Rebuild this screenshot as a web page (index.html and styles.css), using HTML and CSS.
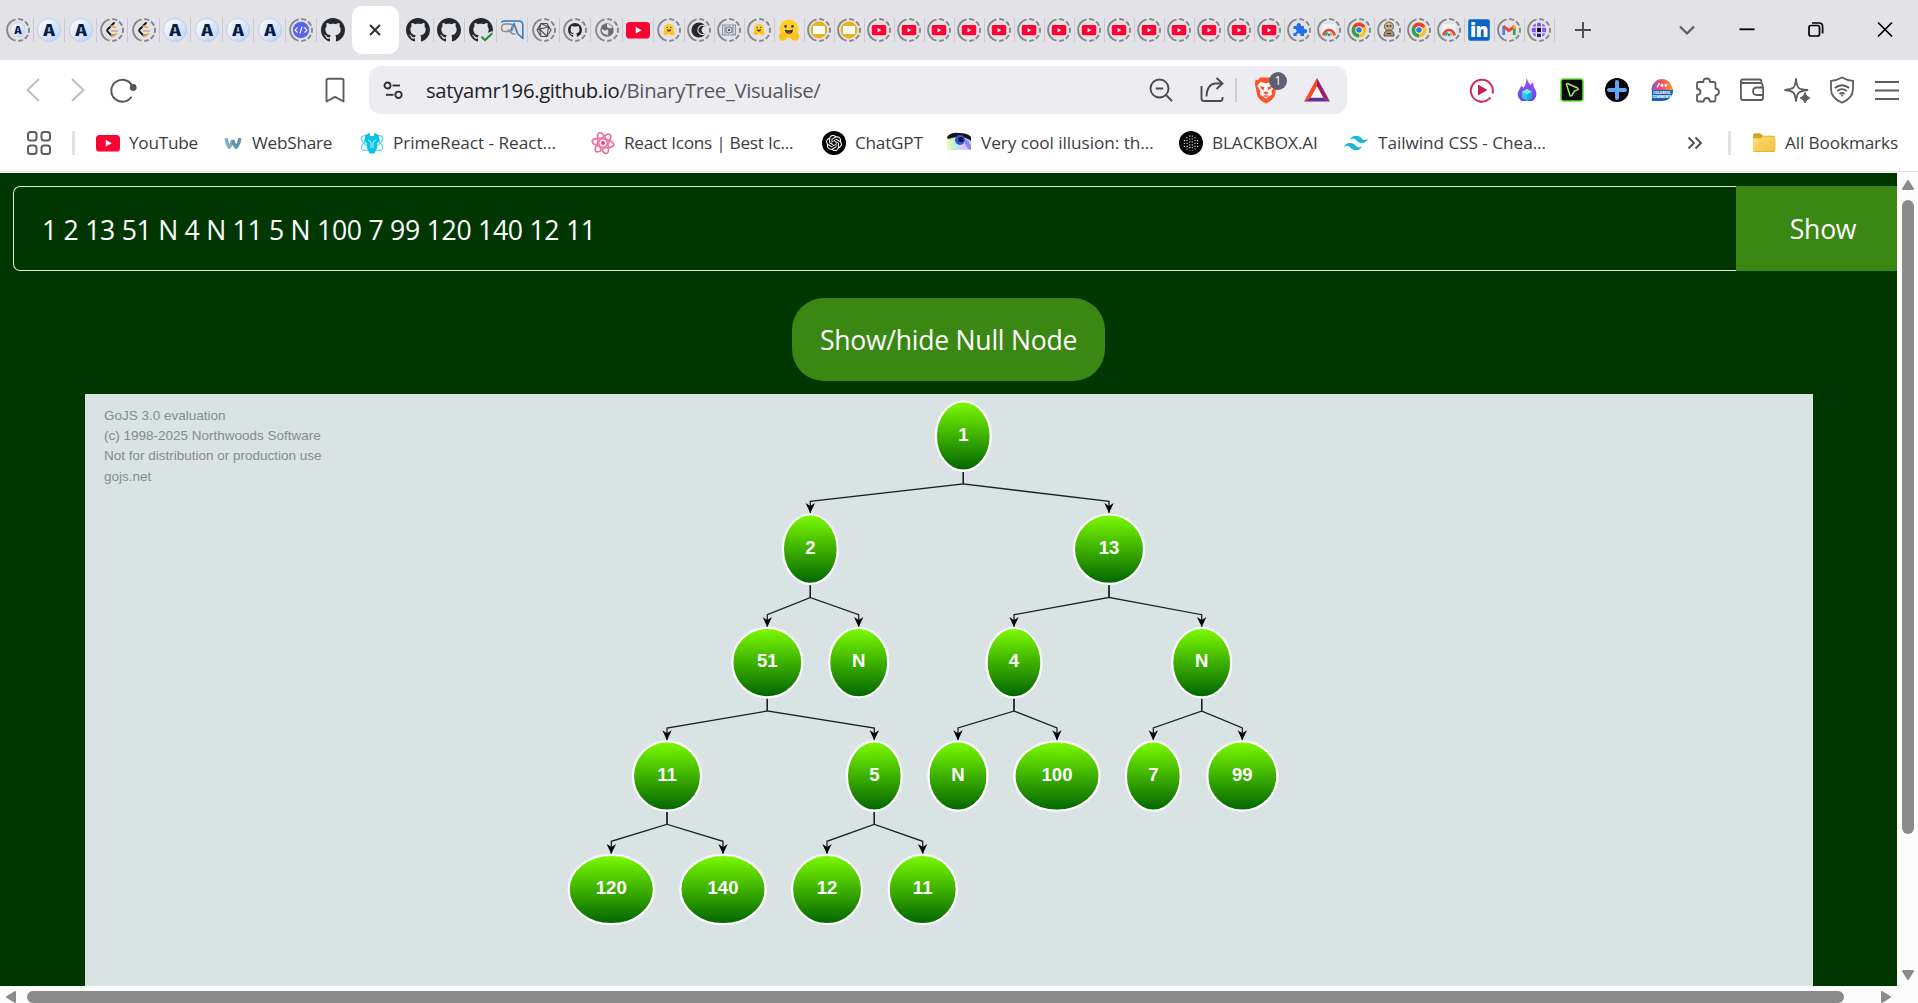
FILE: index.html
```html
<!DOCTYPE html>
<html lang="en">
<head>
<meta charset="utf-8">
<title>BinaryTree Visualise</title>
<link rel="stylesheet" href="styles.css">
</head>
<body>
<svg class="defs" aria-hidden="true">
  <defs>
    <linearGradient id="node-fill" x1="0" y1="0" x2="0" y2="1"><stop offset="0" stop-color="#7cfc00"/><stop offset="1" stop-color="#006400"/></linearGradient>
    <linearGradient id="az-fill" x1="0" y1="0" x2="1" y2="1"><stop offset="0" stop-color="#ffffff"/><stop offset="1" stop-color="#b9d2fb"/></linearGradient>
    <linearGradient id="flame-fill" x1="0" y1="0" x2="0" y2="1"><stop offset="0" stop-color="#b04ff0"/><stop offset="1" stop-color="#5a48ee"/></linearGradient>
    <linearGradient id="folder-fill" x1="0" y1="0" x2="1" y2="1"><stop offset="0" stop-color="#ffe17d"/><stop offset="1" stop-color="#f5bd36"/></linearGradient>
    <linearGradient id="bubble-fill" x1="0" y1="0" x2="1" y2="0"><stop offset="0" stop-color="#7c58d8"/><stop offset=".45" stop-color="#f0506a"/><stop offset="1" stop-color="#f79a2c"/></linearGradient>
    <linearGradient id="eye-fill" x1="0" y1="0" x2="1" y2="0"><stop offset="0" stop-color="#f6f06a"/><stop offset=".35" stop-color="#7fe8d0"/><stop offset=".65" stop-color="#c09cf5"/><stop offset="1" stop-color="#5fd5ff"/></linearGradient>
    <marker id="arrow" markerUnits="userSpaceOnUse" markerWidth="10" markerHeight="11" refX="10" refY="5" orient="auto"><path d="M0 .3L10 5L0 9.7L3 5z"/></marker>
  </defs>
  <symbol id="ring" viewBox="0 0 24 24"><g fill="none" stroke="#85868a" stroke-width="1.9"><path d="M9.5 1.3A11 11 0 0 0 9.5 22.7"/><path d="M12.3 1A11 11 0 0 1 23 12A11 11 0 0 1 12.3 23" stroke-dasharray="5 2.3"/></g></symbol>
  <symbol id="az" viewBox="0 0 24 24"><circle cx="12" cy="12" r="11.5" fill="url(#az-fill)" stroke="#b4c6e6" stroke-width=".8"/><text x="12" y="17.6" text-anchor="middle" class="logo-a">A</text><path d="M10.8 10h2.4M10.600 13h2.800" stroke="#b9cff5" stroke-width="1.2"/></symbol>
  <symbol id="leet" viewBox="0 0 24 24"><path d="M14 5L7.5 11.5Q6.7 12.5 7.5 13.5L11 17.2Q12 18 13.2 17.3" fill="none" stroke="#17181a" stroke-width="1.9" stroke-linecap="round"/><path d="M11 8.4Q13 7.4 15 9.6M11.4 17.5Q14 18.6 16 15.8" fill="none" stroke="#f5a02c" stroke-width="1.8" stroke-linecap="round"/><path d="M11.5 12.8h6" stroke="#b3b4b7" stroke-width="1.7" stroke-linecap="round"/></symbol>
  <symbol id="code" viewBox="0 0 24 24"><circle cx="12" cy="12" r="8.2" fill="#5b63ee"/><path d="M8.6 9.3L6 12l2.6 2.7M15.4 9.3L18 12l-2.6 2.7M13.2 8.5l-2.4 7" fill="none" stroke="#fff" stroke-width="1.1"/></symbol>
  <symbol id="github" viewBox="0 0 16 16"><path d="M8 0C3.58 0 0 3.58 0 8c0 3.54 2.29 6.53 5.47 7.59.4.07.55-.17.55-.38 0-.19-.01-.82-.01-1.49-2.01.37-2.53-.49-2.69-.94-.09-.23-.48-.94-.82-1.13-.28-.15-.68-.52-.01-.53.63-.01 1.08.58 1.23.82.72 1.21 1.87.87 2.33.66.07-.52.28-.87.51-1.07-1.78-.2-3.64-.89-3.64-3.95 0-.87.31-1.59.82-2.15-.08-.2-.36-1.02.08-2.12 0 0 .67-.21 2.2.82.64-.18 1.32-.27 2-.27.68 0 1.36.09 2 .27 1.53-1.04 2.2-.82 2.2-.82.44 1.1.16 1.92.08 2.12.51.56.82 1.27.82 2.15 0 3.07-1.87 3.75-3.65 3.95.29.25.54.73.54 1.48 0 1.07-.01 1.93-.01 2.2 0 .21.15.46.55.38A8.013 8.013 0 0 0 16 8c0-4.42-3.58-8-8-8z" fill="#24292f"/></symbol>
  <symbol id="yt" viewBox="0 0 24 24"><rect y="4" width="24" height="16.5" rx="3.6" fill="#ff0033"/><path d="M9.7 8.8v6.8l6-3.4z" fill="#fff"/></symbol>
  <symbol id="hf" viewBox="0 0 24 24"><circle cx="12" cy="11" r="9.5" fill="#ffcf24"/><circle cx="6" cy="18.5" r="4.2" fill="#ffc21c"/><circle cx="18" cy="18.5" r="4.2" fill="#ffc21c"/><circle cx="8.6" cy="8.4" r="1.3" fill="#3a3b45"/><circle cx="15.4" cy="8.4" r="1.3" fill="#3a3b45"/><path d="M7.8 11.6Q12 13 16.2 11.6Q15.5 16.2 12 16.2T7.8 11.6z" fill="#3a3b45"/><path d="M10 15Q12 13.6 14 15Q12 16.6 10 15z" fill="#ef4e4e"/></symbol>
  <symbol id="slide" viewBox="0 0 24 24"><circle cx="12" cy="12" r="8.4" fill="#eab41e"/><rect x="6" y="8" width="12" height="8" rx=".6" fill="#fff"/></symbol>
  <symbol id="openai" viewBox="0 0 24 24"><path fill="currentColor" d="M22.2819 9.8211a5.9847 5.9847 0 0 0-.5157-4.9108 6.0462 6.0462 0 0 0-6.5098-2.9A6.0651 6.0651 0 0 0 4.9807 4.1818a5.9847 5.9847 0 0 0-3.9977 2.9 6.0462 6.0462 0 0 0 .7427 7.0966 5.98 5.98 0 0 0 .511 4.9107 6.051 6.051 0 0 0 6.5146 2.9001A5.9847 5.9847 0 0 0 13.2599 24a6.0557 6.0557 0 0 0 5.7718-4.2058 5.9894 5.9894 0 0 0 3.9977-2.9001 6.0557 6.0557 0 0 0-.7475-7.0729zm-9.022 12.6081a4.4755 4.4755 0 0 1-2.8764-1.0408l.1419-.0804 4.7783-2.7582a.7948.7948 0 0 0 .3927-.6813v-6.7369l2.02 1.1686a.071.071 0 0 1 .038.052v5.5826a4.504 4.504 0 0 1-4.4945 4.4944zm-9.6607-4.1254a4.4708 4.4708 0 0 1-.5346-3.0137l.142.0852 4.783 2.7582a.7712.7712 0 0 0 .7806 0l5.8428-3.3685v2.3324a.0804.0804 0 0 1-.0332.0615L9.74 19.9502a4.4992 4.4992 0 0 1-6.1408-1.6464zM2.3408 7.8956a4.485 4.485 0 0 1 2.3655-1.9728V11.6a.7664.7664 0 0 0 .3879.6765l5.8144 3.3543-2.0201 1.1685a.0757.0757 0 0 1-.071 0l-4.8303-2.7865A4.504 4.504 0 0 1 2.3408 7.872zm16.5963 3.8558L13.1038 8.364 15.1192 7.2a.0757.0757 0 0 1 .071 0l4.8303 2.7913a4.4944 4.4944 0 0 1-.6765 8.1042v-5.6772a.79.79 0 0 0-.407-.667zm2.0107-3.0231l-.142-.0852-4.7735-2.7818a.7759.7759 0 0 0-.7854 0L9.409 9.2297V6.8974a.0662.0662 0 0 1 .0284-.0615l4.8303-2.7866a4.4992 4.4992 0 0 1 6.6802 4.66zM8.3065 12.863l-2.02-1.1638a.0804.0804 0 0 1-.038-.0567V6.0742a4.4992 4.4992 0 0 1 7.3757-3.4537l-.142.0805L8.704 5.459a.7948.7948 0 0 0-.3927.6813zm1.0976-2.3654l2.602-1.4998 2.6069 1.4998v2.9994l-2.5974 1.4997-2.6067-1.4997Z"/></symbol>
  <symbol id="hexa" viewBox="0 0 24 24"><path d="M9 5.500h6l4 6.500-4 6.500H9L5 12zM9 5.500l7.500 3.500L19 12M16.500 9L15 18.500M16.500 9L7.500 11 5 12M7.500 11L9 5.500M7.500 11L9 18.500M7.500 11L15 18.500" fill="none" stroke="#4b4d51" stroke-width="1.1"/></symbol>
  <symbol id="earth" viewBox="0 0 24 24"><circle cx="12" cy="12" r="6.700" fill="#6a6c70"/><path d="M6.500 10.500q3 3 5 1.500t2 2.500q-1 1 0 2.500-4 0-6.500-3zM12 6q4 0 5.500 3.500l-2.500 1-3-1.500z" fill="#e3e2e7"/></symbol>
  <symbol id="chrome" viewBox="0 0 24 24"><circle cx="12" cy="12" r="7.400" fill="#fcc31e"/><path d="M12 12L5.600 8.300A7.400 7.400 0 0 1 18.400 8.300z" fill="#e8402f"/><path d="M12 12L5.600 8.300A7.400 7.400 0 0 0 12 19.400z" fill="#2fa24c"/><circle cx="12" cy="12" r="3.700" fill="#fff"/><circle cx="12" cy="12" r="2.800" fill="#2b78e4"/></symbol>
  <symbol id="store" viewBox="0 0 24 24"><rect x="5" y="6" width="14" height="12" rx="2" fill="#f3f3f5"/><path d="M6.500 17.500a5.500 5.500 0 0 1 11 0" fill="none" stroke="#dd4a3d" stroke-width="2.700"/><path d="M8.800 17.800a3.200 3.200 0 0 1 2-3" fill="none" stroke="#36a853" stroke-width="2"/><path d="M15.200 17.800a3.200 3.200 0 0 0-2-3" fill="none" stroke="#f8bc1a" stroke-width="2"/><circle cx="12" cy="16.800" r="1.500" fill="#3d7ee8"/></symbol>
  <symbol id="piece" viewBox="0 0 24 24"><path d="M6.500 8h3.300a2.200 2.200 0 1 1 4 0H17v3.200a2.200 2.200 0 1 1 0 4V18h-3.600a2 2 0 1 0-3.600 0H6.500v-3.400a2 2 0 1 0 0-3.400z" fill="#1f6fe8"/></symbol>
</svg>

<header class="tabstrip">
  <div class="tabs tabs-wide">
    <span class="tab"><svg class="fav"><use href="#ring"/><use href="#az" x="4.500" y="4.500" width="15" height="15"/></svg></span>
    <span class="tab"><svg class="fav"><use href="#az"/></svg></span>
    <span class="tab"><svg class="fav"><use href="#az"/></svg></span>
    <span class="tab"><svg class="fav"><use href="#ring"/><use href="#leet"/></svg></span>
    <span class="tab"><svg class="fav"><use href="#ring"/><use href="#leet"/></svg></span>
    <span class="tab"><svg class="fav"><use href="#az"/></svg></span>
    <span class="tab"><svg class="fav"><use href="#az"/></svg></span>
    <span class="tab"><svg class="fav"><use href="#az"/></svg></span>
    <span class="tab"><svg class="fav"><use href="#az"/></svg></span>
    <span class="tab"><svg class="fav"><use href="#ring"/><use href="#code"/></svg></span>
    <span class="tab tab-last"><svg class="fav"><use href="#github"/></svg></span>
  </div>
  <div class="tab-active"><svg width="12" height="12" viewBox="0 0 12 12"><path d="M1 1l10 10M11 1L1 11" stroke="#303136" stroke-width="2"/></svg></div>
  <div class="tabs tabs-wide">
    <span class="tab"><svg class="fav"><use href="#github"/></svg></span>
    <span class="tab"><svg class="fav"><use href="#github"/></svg></span>
    <span class="tab"><svg class="fav" viewBox="0 0 24 24"><use href="#github"/><path d="M10.500 24V16h5l8-3v11z" fill="#e3e2e7"/><path d="M12.500 18.800l3.500 3.400L23 15.500" fill="none" stroke="#1c8a3c" stroke-width="2"/></svg></span>
    <span class="tab"><svg class="fav" viewBox="0 0 24 24" fill="none" stroke-linejoin="round"><path d="M1.500 4.500Q2 3 4.500 3H19q3.800 0 3.800 4v13.500L17.500 15.500" stroke="#2c78c4" stroke-width="1.500"/><path d="M17.500 15.500L14 5.500 10.500 13" stroke="#2c78c4" stroke-width="1.600"/><path d="M1.500 10.200Q1.500 6 5.500 6h4q3.500 0 3.500 3.500t-3.500 4h-4q-4 0-4-3.300zM8 11.500l4.500 4.500h3" stroke="#8b8d92" stroke-width="1.500"/></svg></span>
    <span class="tab"><svg class="fav"><use href="#ring"/><use href="#hexa"/></svg></span>
    <span class="tab"><svg class="fav"><use href="#ring"/><use href="#github" x="5" y="5" width="14" height="14"/></svg></span>
    <span class="tab"><svg class="fav"><use href="#ring"/><use href="#earth"/></svg></span>
    <span class="tab"><svg class="fav"><use href="#yt"/></svg></span>
  </div>
  <div class="tabs tabs-narrow">
    <span class="tab"><svg class="fav"><use href="#ring"/><use href="#hf" x="5.500" y="5" width="13" height="13"/></svg></span>
    <span class="tab"><svg class="fav" viewBox="0 0 24 24"><use href="#ring"/><circle cx="12" cy="12" r="7.600" fill="#26272b"/><path d="M18.500 8.500A4.600 4.600 0 1 0 18.500 15.500" fill="none" stroke="#e3e2e7" stroke-width="1.200"/><path d="M20 8.500h-3.500Q12.500 12 16.500 15.500H20z" fill="#e3e2e7"/></svg></span>
    <span class="tab"><svg class="fav" viewBox="0 0 24 24"><use href="#ring"/><path d="M5.500 7h13v10h-13zM8 7v10M16 7v10" fill="none" stroke="#87929f" stroke-width="1.100"/><circle cx="12" cy="12" r="3.200" fill="#dce2ea" stroke="#5b6b7d"/><circle cx="12" cy="12" r="1.200" fill="#4a5a6d"/></svg></span>
    <span class="tab"><svg class="fav"><use href="#ring"/><use href="#hf" x="5.500" y="5" width="13" height="13"/></svg></span>
    <span class="tab"><svg class="fav"><use href="#hf"/></svg></span>
    <span class="tab"><svg class="fav"><use href="#ring"/><use href="#slide"/></svg></span>
    <span class="tab"><svg class="fav"><use href="#ring"/><use href="#slide"/></svg></span>
    <span class="tab"><svg class="fav"><use href="#ring"/><use href="#yt" x="4.500" y="4.500" width="15" height="15"/></svg></span>
    <span class="tab"><svg class="fav"><use href="#ring"/><use href="#yt" x="4.500" y="4.500" width="15" height="15"/></svg></span>
    <span class="tab"><svg class="fav"><use href="#ring"/><use href="#yt" x="4.500" y="4.500" width="15" height="15"/></svg></span>
    <span class="tab"><svg class="fav"><use href="#ring"/><use href="#yt" x="4.500" y="4.500" width="15" height="15"/></svg></span>
    <span class="tab"><svg class="fav"><use href="#ring"/><use href="#yt" x="4.500" y="4.500" width="15" height="15"/></svg></span>
    <span class="tab"><svg class="fav"><use href="#ring"/><use href="#yt" x="4.500" y="4.500" width="15" height="15"/></svg></span>
    <span class="tab"><svg class="fav"><use href="#ring"/><use href="#yt" x="4.500" y="4.500" width="15" height="15"/></svg></span>
    <span class="tab"><svg class="fav"><use href="#ring"/><use href="#yt" x="4.500" y="4.500" width="15" height="15"/></svg></span>
    <span class="tab"><svg class="fav"><use href="#ring"/><use href="#yt" x="4.500" y="4.500" width="15" height="15"/></svg></span>
    <span class="tab"><svg class="fav"><use href="#ring"/><use href="#yt" x="4.500" y="4.500" width="15" height="15"/></svg></span>
    <span class="tab"><svg class="fav"><use href="#ring"/><use href="#yt" x="4.500" y="4.500" width="15" height="15"/></svg></span>
    <span class="tab"><svg class="fav"><use href="#ring"/><use href="#yt" x="4.500" y="4.500" width="15" height="15"/></svg></span>
    <span class="tab"><svg class="fav"><use href="#ring"/><use href="#yt" x="4.500" y="4.500" width="15" height="15"/></svg></span>
    <span class="tab"><svg class="fav"><use href="#ring"/><use href="#yt" x="4.500" y="4.500" width="15" height="15"/></svg></span>
    <span class="tab"><svg class="fav"><use href="#ring"/><use href="#piece"/></svg></span>
    <span class="tab"><svg class="fav"><use href="#ring"/><use href="#store"/></svg></span>
    <span class="tab"><svg class="fav"><use href="#ring"/><use href="#chrome"/></svg></span>
    <span class="tab"><svg class="fav" viewBox="0 0 24 24"><use href="#ring"/><circle cx="12" cy="8.500" r="4.500" fill="#c9b592" stroke="#6d5b45"/><path d="M7 18q0-6 5-6t5 6z" fill="#a8916f" stroke="#5e4f3c"/><circle cx="10.500" cy="8" r="1" fill="#43382b"/><circle cx="13.500" cy="8" r="1" fill="#43382b"/><path d="M10 15.500h4" stroke="#43382b"/></svg></span>
    <span class="tab"><svg class="fav"><use href="#ring"/><use href="#chrome"/></svg></span>
    <span class="tab"><svg class="fav"><use href="#ring"/><use href="#store"/></svg></span>
    <span class="tab"><svg class="fav" viewBox="0 0 24 24"><rect x="1.200" y="1.200" width="21.600" height="21.600" rx="2" fill="#0a66c2"/><text x="12" y="19.300" text-anchor="middle" class="logo-in">in</text></svg></span>
    <span class="tab"><svg class="fav" viewBox="0 0 24 24" fill="none" stroke-width="2.800"><use href="#ring"/><path d="M6.700 17V8.500" stroke="#4285f4"/><path d="M17.300 17V8.500" stroke="#34a853"/><path d="M6.200 8l5.800 4.700L17.800 8" stroke="#ea4335"/><path d="M17.300 10.500V8" stroke="#fbbc04"/></svg></span>
    <span class="tab"><svg class="fav" viewBox="0 0 24 24"><use href="#ring"/><circle cx="12" cy="12" r="7.300" fill="#8257e8"/><rect x="10" y="9.800" width="4.200" height="4.200" fill="#0c0b12"/><path d="M9 16h6v3H9z" fill="#2c1d5e"/><path d="M9.400 4v16M14.600 4v16M4 9.200h16M4 14.800h16" stroke="#e9e4fa" stroke-width="1.200"/></svg></span>
  </div>
  <svg class="newtab" width="16" height="16" viewBox="0 0 16 16"><path d="M8 0v16M0 8h16" stroke="#4c4d52" stroke-width="1.900"/></svg>
  <div class="winctl">
    <svg width="20" height="20" viewBox="0 0 20 20"><path d="M3 6.500l7 7 7-7" fill="none" stroke="#5a5b60" stroke-width="2.200"/></svg>
    <svg width="20" height="20" viewBox="0 0 20 20"><path d="M2.500 9.300h15" stroke="#000" stroke-width="1.800"/></svg>
    <svg width="20" height="20" viewBox="0 0 20 20" fill="none" stroke="#000" stroke-width="1.700"><rect x="3" y="5.500" width="10.500" height="10.500" rx="2"/><path d="M6 3h7q3.600 0 3.600 3.600v7"/></svg>
    <svg width="20" height="20" viewBox="0 0 20 20"><path d="M3 2.500l14 14M17 2.500l-14 14" stroke="#000" stroke-width="1.700"/></svg>
  </div>
</header>

<nav class="toolbar">
  <div class="navbtns">
    <svg class="icon" viewBox="0 0 24 24" fill="none" stroke="#bebec2" stroke-width="1.900"><path d="M18 1L6.500 12 18 23"/></svg>
    <svg class="icon" viewBox="0 0 24 24" fill="none" stroke="#bebec2" stroke-width="1.900"><path d="M6 1l11.500 11L6 23"/></svg>
    <svg class="icon" viewBox="0 0 24 24"><path d="M21 7.500A11 11 0 1 0 20.500 18.800" fill="none" stroke="#55565b" stroke-width="1.900"/><circle cx="22.200" cy="9.500" r="3.400" fill="#55565b"/></svg>
  </div>
  <svg class="icon bookmark" viewBox="0 0 24 24" fill="none" stroke="#5c5d62" stroke-width="1.900" stroke-linejoin="round"><path d="M3.500 2.500Q3.500.800 5.200.800H18.800Q20.500.800 20.500 2.500V23.500L12 18.800 3.500 23.500z"/></svg>
  <div class="urlbar">
    <svg class="icon tune" viewBox="0 0 24 24" fill="none" stroke="#303136" stroke-width="1.900"><circle cx="6.500" cy="7.500" r="3"/><path d="M11.500 7.500H19"/><circle cx="17.500" cy="16.800" r="3.200"/><path d="M5 16.800h7.500"/></svg>
    <div class="url">satyamr196.github.io<span class="path">/BinaryTree_Visualise/</span></div>
    <div class="urlicons">
      <svg class="icon" viewBox="0 0 24 24" fill="none" stroke="#4a4b50" stroke-width="1.900"><circle cx="10.500" cy="10.500" r="9"/><path d="M17 17l6 6M6.800 10.500h7.400"/></svg>
      <svg class="icon" viewBox="0 0 24 24" fill="none" stroke="#4a4b50" stroke-width="1.900"><path d="M1.500 8v12.500Q1.500 23 4 23H20.500Q22.500 23 22.500 20.500V19M6.500 18.500Q7 6.500 15 5.500H22M16.500 0l6 5.500-6 5.500"/></svg>
      <i class="divider"></i>
      <div class="shield">
        <svg width="24" height="28" viewBox="0 0 24 28"><path d="M6 1.500h12l2 2.500 2.500-.5.500 5-2.500 12Q17 25.500 12 27.500 7 25.500 3.500 20.500L1 8.500l.500-5L4 4z" fill="#fb542b"/><path d="M6.500 6l5.500 1.200L17.500 6l3.300 4-3.300 5 .5 3.500L12 22.500 6 18.500l.5-3.500-3.300-5z" fill="#fff"/><path d="M6.500 10l4 1.200-1 3.300-3-2.500zM17.500 10l-4 1.200 1 3.300 3-2.500zM9 16.500l3-1 3 1-3 2.200zM8.500 20l3.500-1 3.500 1-3.500 1z" fill="#fb542b"/></svg>
        <b class="badge">1</b>
      </div>
      <svg class="bat" viewBox="0 0 26 24"><path d="M13 0L0 23.500l7-4L13 8.500z" fill="#ff4724"/><path d="M13 0l13 23.500-7-4L13 8.500z" fill="#9e1f63"/><path d="M0 23.500h26l-7-4H7z" fill="#662d91"/><path d="M13 8.500l6 11H7z" fill="#fff"/></svg>
    </div>
  </div>
  <div class="extensions">
    <svg class="icon" viewBox="0 0 24 24"><path d="M18.500 21.500A11 11 0 1 1 22.500 15.500" fill="none" stroke="#cf2b56" stroke-width="2"/><circle cx="19.500" cy="20.500" r="1.300" fill="#cf2b56"/><path d="M8 6.500v11L17.500 12z" fill="#c61f4c"/></svg>
    <svg class="icon" viewBox="0 0 24 24"><path d="M11.500 0Q13 4 15.500 7l2.500-3q0 5 2.800 8.500Q23 19 17.500 23H6.500Q1 18.500 3.500 13l3-5.500 2 2.500q3-4 3-10z" fill="url(#flame-fill)"/><path d="M12 11l5 2.800v6L12 23l-5-3.200v-6z" fill="#33c9df"/><path d="M12 11l5 2.800-5 2.700-5-2.700z" fill="#6bf2e2"/><path d="M12 16.500V23l5-3.200v-6z" fill="#2aa5e0"/></svg>
    <svg class="icon" viewBox="0 0 24 24"><rect x="1" y="1" width="22" height="22" rx="2.500" fill="#050805" stroke="#59e02f" stroke-width="1.500"/><path d="M6.500 6.500Q6.300 5.200 8 5.700L17.500 10q1.500 1 0 1.900L14.500 13l-2.700 4.500q-1.200 1.200-1.900-.4z" fill="none" stroke="#a5e86a" stroke-width="1.500"/></svg>
    <svg class="icon" viewBox="0 0 24 24"><circle cx="12" cy="12" r="12" fill="#050508"/><path d="M12 4v16M4 12h16" stroke="#62a6f2" stroke-width="4" stroke-linecap="round"/></svg>
    <svg class="icon" viewBox="0 0 24 24"><path d="M1.800 23L2 11h21q.500 11-10.500 12z" fill="#1a62b5"/><path d="M1.500 12a10.500 11 0 0 1 21 0z" fill="url(#bubble-fill)"/><path d="M7 9.500L9.500 5" stroke="#fff" stroke-width="1.300"/><circle cx="12" cy="7.500" r="1.400" fill="#fff"/><circle cx="15.800" cy="7.500" r="1.400" fill="#fff"/><text x="12" y="16" text-anchor="middle" class="tiny">COLORFUL</text><text x="12" y="19.600" text-anchor="middle" class="tiny">COMMENTS</text></svg>
    <svg class="icon" viewBox="0 0 24 24" fill="none" stroke="#5c5d62" stroke-width="1.800" stroke-linejoin="round"><path d="M2 5.500Q2 4 3.500 4H8.500Q8 .500 11.500.500T15 4h4q1.500 0 1.500 1.500v5q3.500.500 3.500 3.500t-3.500 3.500V22q0 1.500-1.500 1.500h-4q-.500-3.500-3.200-3.500T8.500 23.500h-5Q2 23.500 2 22v-5q3.500-.300 3.500-3T2 10.500z"/></svg>
    <svg class="icon" viewBox="0 0 24 24" fill="none" stroke="#5c5d62" stroke-width="1.800"><path d="M22.500 9V7Q22.500 5 20.500 5H3Q.900 5 .900 3.200T3 1.500h16.500Q21.500 1.500 21.500 4M.900 3.200V20Q.900 22 3 22h18q2 0 2-2v-2M23.100 9.500h-6Q13 9.500 13 13.200t4.100 3.800h6z"/></svg>
    <svg class="icon" viewBox="0 0 24 24"><path d="M11 1Q12 9 14 10.200T22.500 12Q16 13 14 14.500T11 23Q10 16 8.300 14.500T0 12Q6.500 11.200 8.300 9.800T11 1z" fill="none" stroke="#5c5d62" stroke-width="1.800" stroke-linejoin="round"/><path d="M20 14.500q1 4.500 5 5.500-4 1-5 5-1-4-5-5 4-1 5-5.500z" fill="#5c5d62" stroke="#5c5d62" stroke-width="1"/></svg>
    <svg class="icon" viewBox="0 0 24 24" fill="none" stroke="#5c5d62" stroke-width="1.800"><path d="M12-.500Q17 2.500 23 2.800V11q0 9-11 13.800Q1 20 1 11V2.800Q7 2.500 12-.500z"/><path d="M4.800 10Q12 4.500 19.200 10M7.200 13Q12 9.300 16.800 13M9.500 16Q12 14 14.500 16"/><circle cx="12" cy="17.500" r="1" fill="#5c5d62" stroke="none"/></svg>
    <svg class="icon" viewBox="0 0 24 24" stroke="#5c5d62" stroke-width="1.900"><path d="M0 4h24M0 12.500h24M0 21h24"/></svg>
  </div>
</nav>

<div class="bookmarks">
  <svg class="icon apps" viewBox="0 0 24 24" fill="none" stroke="#5c5d62" stroke-width="2"><rect x="1" y="1" width="8.500" height="8.500" rx="2.500"/><rect x="14.500" y="1" width="8.500" height="8.500" rx="2.500"/><rect x="1" y="14.500" width="8.500" height="8.500" rx="2.500"/><rect x="14.500" y="14.500" width="8.500" height="8.500" rx="2.500"/></svg>
  <i class="bar"></i>
  <a class="bm bm-yt"><svg class="icon"><use href="#yt"/></svg>YouTube</a>
  <a class="bm bm-ws"><svg class="icon ws" viewBox="0 0 24 24" fill="none" stroke-width="4.600" stroke-linejoin="round"><path d="M3 5.500Q4 14 7 17.500 10.500 14 11.500 8" stroke="#82aebf"/><path d="M11.500 8Q13 14 16 17.500 20 14 21 5.500" stroke="#5f93aa"/></svg>WebShare</a>
  <a class="bm bm-prime"><svg class="icon" viewBox="0 0 24 24"><g fill="none" stroke="#55d6ef" stroke-width="1.200"><ellipse cx="12" cy="12" rx="12" ry="5" transform="rotate(30 12 12)"/><ellipse cx="12" cy="12" rx="12" ry="5" transform="rotate(-30 12 12)"/></g><path d="M6 3.500L10 2v3h4V2l4 1.500 2 6.500-3 2.500v4.500L14.500 22.500h-5L7 17v-4.500L4 10z" fill="#06c2e6"/><path d="M8 9l3 2v6M16 9l-3 2v6" stroke="#b9f2fb" fill="none"/></svg>PrimeReact - React...</a>
  <a class="bm bm-icons"><svg class="icon" viewBox="0 0 24 24"><g fill="none" stroke="#ee6c9d" stroke-width="1.600"><ellipse cx="12" cy="12" rx="11" ry="4.300" transform="rotate(10 12 12)"/><ellipse cx="12" cy="12" rx="11" ry="4.300" transform="rotate(70 12 12)"/><ellipse cx="12" cy="12" rx="11" ry="4.300" transform="rotate(130 12 12)"/></g><circle cx="12" cy="12" r="2" fill="#e8407f"/></svg>React Icons | Best Ic...</a>
  <a class="bm bm-gpt"><svg class="icon gpt" viewBox="0 0 24 24"><circle cx="12" cy="12" r="12" fill="#000"/><use href="#openai" x="4" y="4" width="16" height="16"/></svg>ChatGPT</a>
  <a class="bm bm-eye"><svg class="icon" viewBox="0 0 24 24"><rect y="5" width="24" height="14" fill="url(#eye-fill)" opacity=".6"/><path d="M0 6Q4 1 12 2q9 0 12 4v4q-5-4-11-4T1 8z" fill="#17151c"/><circle cx="13" cy="9" r="5" fill="#3455d4"/><circle cx="14" cy="8.500" r="2.600" fill="#0d0f2e"/><path d="M18 8q4 1 6 7v4q-4-1-6-6z" fill="#9c7cf0"/></svg>Very cool illusion: th...</a>
  <a class="bm bm-bb"><svg class="icon" viewBox="0 0 24 24"><circle cx="12" cy="12" r="12" fill="#050505"/><path d="M8 6v12.500M10.700 4.500v15M13.300 4.500v15M16 6v12.500M5.400 9v7M18.600 9v7" stroke="#d8d8d8" stroke-width="1.200" stroke-dasharray="1.200 1.700"/></svg>BLACKBOX.AI</a>
  <a class="bm bm-tw"><svg class="icon" viewBox="0 0 24 24"><path d="M12 4.800c-3.200 0-5.200 1.600-6 4.800 1.200-1.600 2.600-2.200 4.200-1.800.9.200 1.600.9 2.300 1.700C13.700 10.700 15 12 18 12c3.200 0 5.200-1.600 6-4.800-1.200 1.600-2.600 2.200-4.200 1.800-.9-.2-1.600-.9-2.300-1.700C16.300 6.100 15 4.800 12 4.800zM6 12c-3.200 0-5.200 1.600-6 4.800 1.200-1.600 2.600-2.200 4.200-1.800.9.200 1.600.9 2.300 1.700 1.200 1.200 2.500 2.500 5.500 2.500 3.200 0 5.200-1.600 6-4.800-1.200 1.600-2.600 2.200-4.200 1.800-.9-.2-1.600-.9-2.300-1.700C10.300 13.300 9 12 6 12z" fill="#17b9d4"/></svg>Tailwind CSS - Chea...</a>
  <div class="bm-end">
    <svg width="16" height="16" viewBox="0 0 16 16" fill="none" stroke="#4c4d52" stroke-width="1.900"><path d="M1.500 2.500L7 8l-5.500 5.500M8.500 2.500L14 8l-5.500 5.500"/></svg>
    <i class="bar"></i>
    <a class="bm"><svg class="icon" viewBox="0 0 24 24"><path d="M1 4Q1 2.200 2.500 2.200H8L11 4.800H21.500Q23.200 4.800 23.200 6.500V19Q23.200 21 21.500 21h-19Q1 21 1 19z" fill="#d9a326"/><path d="M1 7.300h8L11 5.500h11q1.200 0 1.200 1.500v12q0 1.500-1.700 1.500h-19Q1 20.500 1 19z" fill="url(#folder-fill)"/></svg>All Bookmarks</a>
  </div>
</div>

<main class="viewport">
  <div class="page">
    <form class="entry">
      <div class="field">1 2 13 51 N 4 N 11 5 N 100 7 99 120 140 12 11</div>
      <div class="show">Show</div>
    </form>
    <div class="toggle">Show/hide Null Node</div>
    <section class="canvas">
      <svg class="tree" viewBox="85 394 1728 592" width="1728" height="592">
        <g class="mark"><text x="104" y="419.500">GoJS 3.0 evaluation</text><text x="104" y="440">(c) 1998-2025 Northwoods Software</text><text x="104" y="460">Not for distribution or production use</text><text x="104" y="480.500">gojs.net</text></g>
        <g class="links">
          <path d="M963.300 472V484L810.300 501.300V513"/><path d="M963.300 472V484L1109 501.300V513"/>
          <path d="M810.300 585.300V597.500L767.300 614.700V627"/><path d="M810.300 585.300V597.500L858.700 614.700V627"/>
          <path d="M1109 585.300V597.500L1014 614.700V627"/><path d="M1109 585.300V597.500L1201.700 614.700V627"/>
          <path d="M767.300 698.700V711L667 728V740.300"/><path d="M767.300 698.700V711L874.300 728V740.300"/>
          <path d="M1014 698.700V711L958 728V740.300"/><path d="M1014 698.700V711L1057 728V740.300"/>
          <path d="M1201.700 698.700V711L1153.300 728V740.300"/><path d="M1201.700 698.700V711L1242.300 728V740.300"/>
          <path d="M667 812V824.300L611.300 841.300V854"/><path d="M667 812V824.300L723 841.300V854"/>
          <path d="M874.300 812V824.300L827 841.300V854"/><path d="M874.300 812V824.300L922.700 841.300V854"/>
        </g>
        <g class="nodes">
          <ellipse cx="963.300" cy="436" rx="27.400" ry="34.700"/><text x="963.300" y="441">1</text>
          <ellipse cx="810.300" cy="549.200" rx="27.400" ry="34.700"/><text x="810.300" y="554">2</text>
          <ellipse cx="1109" cy="549.200" rx="35" ry="34.700"/><text x="1109" y="554">13</text>
          <ellipse cx="767.300" cy="662.600" rx="35" ry="34.700"/><text x="767.300" y="667.300">51</text>
          <ellipse cx="858.700" cy="662.600" rx="29.500" ry="34.700"/><text x="858.700" y="667.300">N</text>
          <ellipse cx="1014" cy="662.600" rx="27.400" ry="34.700"/><text x="1014" y="667.300">4</text>
          <ellipse cx="1201.700" cy="662.600" rx="29.500" ry="34.700"/><text x="1201.700" y="667.300">N</text>
          <ellipse cx="667" cy="776" rx="34" ry="34.700"/><text x="667" y="781">11</text>
          <ellipse cx="874.300" cy="776" rx="27.400" ry="34.700"/><text x="874.300" y="781">5</text>
          <ellipse cx="958" cy="776" rx="29.500" ry="34.700"/><text x="958" y="781">N</text>
          <ellipse cx="1057" cy="776" rx="42.600" ry="34.700"/><text x="1057" y="781">100</text>
          <ellipse cx="1153.300" cy="776" rx="27.400" ry="34.700"/><text x="1153.300" y="781">7</text>
          <ellipse cx="1242.300" cy="776" rx="35" ry="34.700"/><text x="1242.300" y="781">99</text>
          <ellipse cx="611.300" cy="889.500" rx="42.600" ry="34.700"/><text x="611.300" y="894.300">120</text>
          <ellipse cx="723" cy="889.500" rx="42.600" ry="34.700"/><text x="723" y="894.300">140</text>
          <ellipse cx="827" cy="889.500" rx="35" ry="34.700"/><text x="827" y="894.300">12</text>
          <ellipse cx="922.700" cy="889.500" rx="34" ry="34.700"/><text x="922.700" y="894.300">11</text>
        </g>
      </svg>
    </section>
  </div>
  <div class="vscroll">
    <svg width="14" height="12" viewBox="0 0 14 12"><path d="M7 2l5 8H2z"/></svg>
    <i class="vthumb"></i>
    <svg width="14" height="12" viewBox="0 0 14 12"><path d="M7 10l5-8H2z"/></svg>
  </div>
  <div class="hscroll">
    <svg width="12" height="14" viewBox="0 0 12 14"><path d="M2 7l8-5v10z"/></svg>
    <i class="hthumb"></i>
    <svg width="12" height="14" viewBox="0 0 12 14"><path d="M10 7L2 2v10z"/></svg>
  </div>
</main>
</body>
</html>
```
FILE: styles.css
```css
* { box-sizing: border-box; }
html, body { margin: 0; height: 1003px; overflow: hidden; }
body {
  background: #fff;
  color: #3c3d42;
  font-family: "Open Sans", "Noto Sans", sans-serif;
  display: flex;
  flex-direction: column;
}
svg { display: block; flex: none; overflow: visible; }
.defs { position: absolute; width: 0; height: 0; }
.icon, .fav { width: 24px; height: 24px; }

/* tab strip */
.tabstrip { height: 60px; flex: none; background: #e3e2e7; display: flex; align-items: center; padding-left: 2.25px; }
.tabs { display: flex; }
.tab { height: 24px; display: flex; align-items: center; justify-content: center; border-right: 1px solid #cbcad0; flex: none; }
.tab-last { border-right-color: transparent; }
.tabs-wide .tab { width: 31.5px; }
.tabs-narrow { margin-left: .5px; }
.tabs-narrow .tab { width: 30px; }
.tab-active { width: 47px; height: 48px; margin: 0 3.5px 0 3px; border-radius: 10px; background: #fff; display: flex; align-items: center; justify-content: center; }
.newtab { margin-left: 20px; }
.winctl { margin-left: auto; padding-right: 23px; display: flex; gap: 49px; }
.winctl svg:first-child { margin-right: -9px; }
.logo-a { font: 900 16px Inter, sans-serif; fill: #0a1a3f; }
.logo-in { font: 800 19px "Open Sans", sans-serif; fill: #fff; letter-spacing: -.5px; }
.tiny { font: 800 3.3px "Open Sans", sans-serif; fill: #fff; }

/* toolbar */
.toolbar { height: 60px; flex: none; display: flex; align-items: center; }
.navbtns { display: flex; gap: 21px; padding-left: 21px; }
.bookmark { margin-left: 188px; }
.urlbar { width: 978px; height: 48px; margin-left: 22px; border-radius: 12px; background: #edecf1; display: flex; align-items: center; padding: 0 17px 0 12px; }
.url { margin-left: 21px; font-size: 20.3px; line-height: 28px; color: #202126; letter-spacing: -.33px; white-space: nowrap; }
.path { color: #56575d; }
.urlicons { margin-left: auto; display: flex; align-items: center; }
.urlicons > .icon + .icon { margin-left: 27px; }
.divider { width: 2px; height: 24px; margin: 0 17px 0 11px; background: #cdccd2; }
.shield { position: relative; }
.badge { position: absolute; left: 15px; top: -4px; width: 18px; height: 18px; border-radius: 9px; background: #5e6070; color: #fff; font: 12px/18px "Open Sans", sans-serif; text-align: center; }
.bat { width: 26px; height: 24px; margin-left: 26px; }
.extensions { margin-left: auto; margin-right: 19px; display: flex; gap: 21px; }

/* bookmarks bar */
.bookmarks { height: 53px; flex: none; display: flex; align-items: center; padding: 0 20px 7px 27px; border-bottom: 1px solid #fff; box-shadow: inset 0 -1px #e0e0e3; font-size: 17.2px; letter-spacing: -.25px; white-space: nowrap; }
.bar { width: 3px; height: 24px; background: #e1e0e5; }
.apps + .bar { margin: 0 21px; }
.bm { display: flex; align-items: center; gap: 9px; flex: none; }
.bm-yt { width: 128px; }
.bm-ws { width: 136px; gap: 7px; }
.ws { width: 18px; margin: 0 3px 0 0; }
.bm-prime { width: 231px; letter-spacing: -.03px; }
.bm-icons { width: 231px; }
.bm-gpt { width: 125px; gap: 9px; }
.gpt { color: #fff; }
.bm-eye { width: 232px; gap: 10px; letter-spacing: -.05px; }
.bm-bb { width: 165px; letter-spacing: -.1px; }
.bm-tw { gap: 10px; letter-spacing: -.05px; }
.bm-end { margin-left: auto; display: flex; align-items: center; letter-spacing: -.12px; }
.bm-end .bar { margin: 0 21px 0 25px; }

/* page area and scrollbars */
.viewport { flex: none; height: 830px; display: grid; grid-template: 813px 17px / 1897px 21px; background: #fcfcfc; }
.page { background: #003700; overflow: hidden; display: flex; flex-direction: column; align-items: center; padding-top: 13px; font-size: 26.6px; letter-spacing: -.27px; color: #fff; }
.entry { align-self: stretch; display: flex; height: 85px; margin: 0 -13px 27px 13px; }
.field { flex: 1; border: 1px solid #dbe8db; border-right: 0; border-radius: 7px 0 0 7px; padding-left: 28px; line-height: 87px; white-space: nowrap; }
.show { width: 174px; background: #3a8714; text-align: center; line-height: 87px; }
.toggle { width: 313px; height: 83px; border-radius: 32px; background: #3a8714; text-align: center; line-height: 85px; flex: none; }
.canvas { width: 1728px; margin-top: 13px; flex: 1; background: #dae3e4; }
.mark text { font: 13.5px "Liberation Sans", Arial, sans-serif; fill: #868b8b; letter-spacing: 0; }
.links path { fill: none; stroke: #1c1f1f; stroke-width: 1.3; marker-end: url(#arrow); }
.nodes ellipse { fill: url(#node-fill); stroke: #fff; stroke-width: 2.2; }
.nodes text { font: bold 18.6px "Liberation Sans", Arial, sans-serif; letter-spacing: 0; text-anchor: middle; fill: #fff; }
.vscroll { display: flex; flex-direction: column; align-items: center; padding: 6px 0 5px; }
.vscroll path, .hscroll path { fill: #8b8b8b; stroke: #8b8b8b; stroke-width: 2; stroke-linejoin: round; }
.vthumb { width: 12px; height: 634px; margin: 9px 0 auto; border-radius: 6px; background: #8b8b8b; }
.hscroll { display: flex; align-items: flex-start; padding: 4px 5px 0; height: 17px; overflow: hidden; }
.hthumb { width: 1817px; height: 12px; margin: 1px auto 0 10px; border-radius: 6px; background: #8b8b8b; }
```
